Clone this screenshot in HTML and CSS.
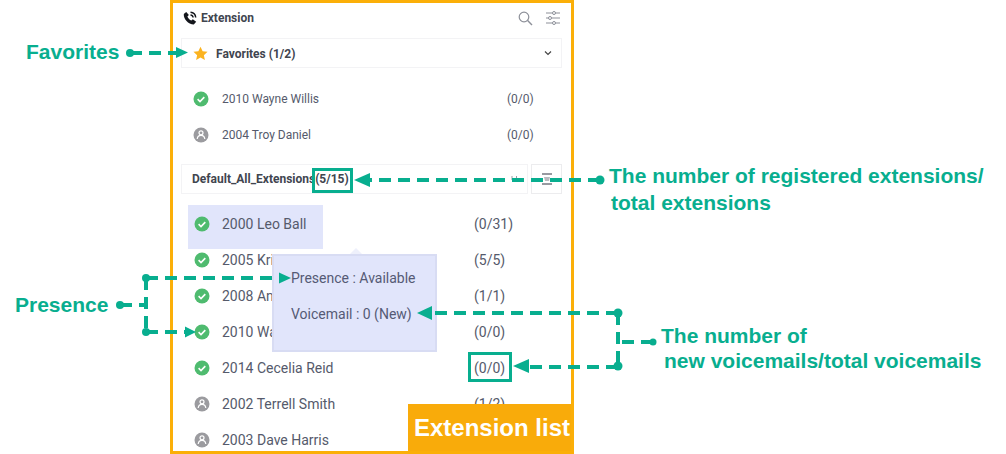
FILE: index.html
```html
<!DOCTYPE html>
<html lang="en">
<head>
    <meta charset="UTF-8">
    <title>Extension list</title>
    <link rel="stylesheet" href="styles.css">
</head>
<body>
    <svg width="0" height="0" class="defs">
        <symbol id="ok" viewBox="0 0 16 16">
            <circle cx="8" cy="8" r="7.5" fill="#4fbb6f"/>
            <path d="M4.6 8.2l2.4 2.3 4.3-4.4" fill="none" stroke="#fff" stroke-width="1.6"/>
        </symbol>
        <symbol id="off" viewBox="0 0 16 16">
            <circle cx="8" cy="8" r="7.5" fill="#9b9b9f"/>
            <circle cx="8" cy="5.8" r="2" fill="none" stroke="#fff" stroke-width="1.2"/>
            <path d="M4.2 12c.3-2.400 1.800-3.600 3.800-3.600s3.500 1.200 3.800 3.600" fill="none" stroke="#fff" stroke-width="1.2"/>
        </symbol>
    </svg>

    <div class="stage">
        <div class="panel">
            <div class="panel-head">
                <svg class="phone" width="14" height="14" viewBox="0 0 14 14">
                    <path d="M3.200 1L.8 3c-.4 5 4.400 10.400 10 10.400l2.400-2.600-3.400-2.600-1.400 1.400C6.800 9.200 5 7.400 4.400 5.600l1.500-1.500z" fill="#14161c"/>
                    <path d="M7.500 1.300c2.900.2 5 2.300 5.200 5.200M7.500 3.900c1.400.1 2.500 1.200 2.600 2.600" fill="none" stroke="#14161c" stroke-width="1.500"/>
                </svg>
                <span class="panel-title">Extension</span>
                <svg class="search" width="15" height="15" viewBox="0 0 15 15">
                    <circle cx="6" cy="6" r="4.800" fill="none" stroke="#8d9099" stroke-width="1.200"/>
                    <path d="M9.600 9.600l4.400 4.400" stroke="#8d9099" stroke-width="1.400"/>
                </svg>
                <svg class="sliders" width="14" height="14" viewBox="0 0 14 14">
                    <path d="M0 2h6.500M9.500 2H14M0 7h2.500M5.500 7H14M0 12h6.500M9.500 12H14" stroke="#8d9099" stroke-width="1"/>
                    <circle cx="8" cy="2" r="1.500" fill="none" stroke="#8d9099"/>
                    <circle cx="4" cy="7" r="1.500" fill="none" stroke="#8d9099"/>
                    <circle cx="8" cy="12" r="1.500" fill="none" stroke="#8d9099"/>
                </svg>
            </div>

            <div class="group-box group-box-fav">
                <svg class="star" width="15" height="15" viewBox="0 0 24 24">
                    <path d="M12 1l3.400 7.300 7.900.9-5.900 5.400 1.600 7.900-7-4-7 4 1.600-7.900L.7 9.200l7.900-.9z" fill="#fbb320"/>
                </svg>
                <span class="group-title">Favorites (1/2)</span>
                <svg class="chevron" width="8" height="6" viewBox="0 0 8 6">
                    <path d="M1 1.500l3 3 3-3" fill="none" stroke="#444" stroke-width="1.200"/>
                </svg>
            </div>

            <div class="fav-list">
                <div class="row">
                    <svg class="dot" width="16" height="16"><use href="#ok"/></svg>
                    <span class="name">2010 Wayne Willis</span>
                    <span class="count">(0/0)</span>
                </div>
                <div class="row">
                    <svg class="dot" width="16" height="16"><use href="#off"/></svg>
                    <span class="name">2004 Troy Daniel</span>
                    <span class="count">(0/0)</span>
                </div>
            </div>

            <div class="group-bar">
                <div class="group-box group-box-all">
                    <span class="group-title">Default_All_Extensions(5/15)</span>
                    <svg class="more" width="7" height="4" viewBox="0 0 7 4">
                        <path d="M1 0v4M5.500 0v4" stroke="#9a9da5"/>
                    </svg>
                </div>
                <div class="collapse-btn">
                    <svg width="12" height="12" viewBox="0 0 12 12">
                        <path d="M1 1h10M1 11h10" stroke="#777a82" stroke-width="1.400"/>
                        <path d="M3 4h6l-1 4H4z" fill="#b9bbc0"/>
                    </svg>
                </div>
            </div>

            <div class="ext-list">
                <div class="row row-active">
                    <svg class="dot" width="16" height="16"><use href="#ok"/></svg>
                    <span class="name">2000 Leo Ball</span>
                    <span class="count">(0/31)</span>
                </div>
                <div class="row">
                    <svg class="dot" width="16" height="16"><use href="#ok"/></svg>
                    <span class="name">2005 Kristin Hale</span>
                    <span class="count">(5/5)</span>
                </div>
                <div class="row">
                    <svg class="dot" width="16" height="16"><use href="#ok"/></svg>
                    <span class="name">2008 Ann Lowe</span>
                    <span class="count">(1/1)</span>
                </div>
                <div class="row">
                    <svg class="dot" width="16" height="16"><use href="#ok"/></svg>
                    <span class="name">2010 Wayne Willis</span>
                    <span class="count">(0/0)</span>
                </div>
                <div class="row">
                    <svg class="dot" width="16" height="16"><use href="#ok"/></svg>
                    <span class="name">2014 Cecelia Reid</span>
                    <span class="count">(0/0)</span>
                </div>
                <div class="row">
                    <svg class="dot" width="16" height="16"><use href="#off"/></svg>
                    <span class="name">2002 Terrell Smith</span>
                    <span class="count">(1/2)</span>
                </div>
                <div class="row">
                    <svg class="dot" width="16" height="16"><use href="#off"/></svg>
                    <span class="name">2003 Dave Harris</span>
                    <span class="count">(0/0)</span>
                </div>
            </div>

            <div class="panel-label">Extension list</div>
        </div>

        <div class="tooltip">
            <div class="tooltip-line">Presence : Available</div>
            <div class="tooltip-line">Voicemail : 0 (New)</div>
        </div>

        <!-- annotations drawn over the screenshot -->
        <div class="mark mark-total"></div>
        <div class="mark mark-voicemail"></div>

        <svg class="arrows" width="1006" height="454" viewBox="0 0 1006 454">
            <g class="dash">
                <path d="M130 53H178"/>
                <path d="M120 305H146"/>
                <path d="M146 278V332"/>
                <path d="M146 278H280"/>
                <path d="M146 332H187"/>
                <path d="M600 180H368"/>
                <path d="M618 313H430"/>
                <path d="M618 313V367"/>
                <path d="M618 367H528"/>
                <path d="M622 342H653"/>
            </g>
            <g class="tip">
                <circle cx="130" cy="53" r="4"/>
                <path d="M176 47l12 5.500-12 5.500z"/>
                <circle cx="120" cy="305" r="4"/>
                <circle cx="146" cy="278" r="4"/>
                <circle cx="146" cy="332" r="4"/>
                <path d="M279 272.500l12 5.500-12 5.500z"/>
                <path d="M185 326.500l11 5.500-11 5.500z"/>
                <circle cx="600" cy="180" r="4.500"/>
                <path d="M354 180l16-7v14z"/>
                <circle cx="618" cy="313" r="4.500"/>
                <path d="M417 313l15-7v14z"/>
                <circle cx="618" cy="366" r="4.500"/>
                <path d="M513 366l16-7v14z"/>
                <circle cx="653" cy="342" r="3.500"/>
            </g>
        </svg>

        <div class="note note-favorites">Favorites</div>
        <div class="note note-presence">Presence</div>
        <div class="note note-registered">The number of registered extensions/<br><span class="indent-a">total extensions</span></div>
        <div class="note note-voicemails">The number of<br><span class="indent-b">new voicemails/total voicemails</span></div>
    </div>
</body>
</html>
```

FILE: styles.css
```css
body {
    margin: 0;
    background: #fff;
    font-family: Roboto, sans-serif;
}

.defs {
    display: block;
    height: 0;
}

.stage {
    position: relative;
    width: 1006px;
    height: 454px;
    overflow: hidden;
}

.panel {
    position: relative;
    box-sizing: border-box;
    width: 404px;
    height: 454px;
    margin-left: 170px;
    border: 3px solid #fbaf08;
    overflow: hidden;
    background: #fff;
}

.panel-head {
    display: flex;
    align-items: center;
    height: 35px;
    padding: 0 11px 5px 10px;
    box-sizing: border-box;
}

.phone {
    margin-right: 4px;
}

.panel-title {
    flex: 1;
    font-size: 12px;
    font-weight: 700;
    color: #41454f;
}

.search {
    margin-right: 13px;
}

.group-box {
    display: flex;
    align-items: center;
    box-sizing: border-box;
    height: 30px;
    margin: 0 9px 0 8px;
    padding: 0 9px 0 11px;
    border: 1px solid #f3f3f5;
}

.group-box-fav .group-title {
    padding-top: 2px;
}

.star {
    margin-right: 8px;
}

.group-title {
    flex: 1;
    font-size: 12px;
    font-weight: 700;
    color: #41454f;
    white-space: nowrap;
}

.fav-list {
    margin-top: 13px;
}

.row {
    display: flex;
    align-items: center;
    height: 36px;
    color: #555a6b;
    font-size: 12px;
}

.dot {
    flex: none;
    margin-left: 20px;
    margin-right: 13px;
}

.name {
    width: 285px;
    white-space: nowrap;
}

.group-bar {
    display: flex;
    gap: 3px;
    margin: 11px 9px 0 8px;
}

.group-box-all {
    flex: 1;
    margin: 0;
    padding: 0 7px 0 10px;
}

.more {
    margin-right: 2px;
    margin-bottom: 3px;
}

.collapse-btn {
    display: flex;
    align-items: center;
    justify-content: center;
    box-sizing: border-box;
    width: 31px;
    height: 30px;
    border: 1px solid #ececee;
}

.ext-list {
    margin-top: 11px;
}

.ext-list .row {
    font-size: 14px;
}

.ext-list .dot {
    margin-left: 21px;
    margin-right: 12px;
}

.ext-list .name {
    width: 252px;
}

.row-active {
    box-sizing: border-box;
    align-items: flex-start;
    height: 44px;
    margin-bottom: -7px;
    padding-top: 1px;
    line-height: 36px;
    background: linear-gradient(#e1e5fb, #e1e5fb) 15px 0 / 135px 44px no-repeat;
}

.row-active .dot {
    margin-top: 10px;
}

.panel-label {
    position: absolute;
    right: 0;
    bottom: 0;
    box-sizing: border-box;
    width: 163px;
    height: 47px;
    padding-left: 6px;
    background: #f9ab0a;
    color: #fff;
    font: 700 24px/47px "Liberation Sans", Arial, sans-serif;
    white-space: nowrap;
}

.tooltip {
    position: absolute;
    left: 272px;
    top: 254px;
    box-sizing: border-box;
    width: 165px;
    height: 98px;
    padding: 13px 0 0 17px;
    background: #e1e5fb;
    border: 2px solid #d8dcf3;
    color: #555a75;
    font-size: 14px;
}

.tooltip::before {
    content: "";
    position: absolute;
    left: 76px;
    top: -8px;
    border-left: 6px solid transparent;
    border-right: 6px solid transparent;
    border-bottom: 6px solid #eef0fb;
}

.tooltip-line {
    height: 36px;
    line-height: 18px;
}

.mark {
    position: absolute;
    box-sizing: border-box;
    border: 3px solid #08ae8f;
}

.mark-total {
    left: 312px;
    top: 168px;
    width: 41px;
    height: 25px;
}

.mark-voicemail {
    left: 468px;
    top: 352px;
    width: 44px;
    height: 30px;
}

.arrows {
    position: absolute;
    left: 0;
    top: 0;
    pointer-events: none;
}

.dash path {
    fill: none;
    stroke: #08ae8f;
    stroke-width: 4;
    stroke-dasharray: 12 7;
}

.tip {
    fill: #08ae8f;
}

.note {
    position: absolute;
    color: #08ae8f;
    font: 700 21px/27px "Liberation Sans", Arial, sans-serif;
    white-space: nowrap;
}

.note-favorites {
    left: 26px;
    top: 38px;
}

.note-presence {
    left: 15px;
    top: 291px;
}

.note-registered {
    left: 609px;
    top: 162px;
}

.note-voicemails {
    left: 661px;
    top: 323px;
    line-height: 25px;
}

.indent-a {
    margin-left: 2px;
}

.indent-b {
    margin-left: 3px;
}
```
